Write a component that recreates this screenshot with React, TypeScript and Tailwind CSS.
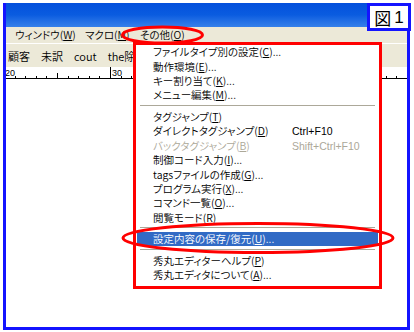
import React from "react";

type Item =
  | { sep: true }
  | {
      sep?: false;
      label: string;
      k: string;
      dots?: boolean;
      sc?: string;
      disabled?: boolean;
      active?: boolean;
    };

const ITEMS: Item[] = [
  { label: "ファイルタイプ別の設定", k: "C", dots: true },
  { label: "動作環境", k: "E", dots: true },
  { label: "キー割り当て", k: "K", dots: true },
  { label: "メニュー編集", k: "M", dots: true },
  { sep: true },
  { label: "タグジャンプ", k: "T" },
  { label: "ダイレクトタグジャンプ", k: "D", sc: "Ctrl+F10" },
  { label: "バックタグジャンプ", k: "B", sc: "Shift+Ctrl+F10", disabled: true },
  { label: "制御コード入力", k: "I", dots: true },
  { label: "tagsファイルの作成", k: "G", dots: true },
  { label: "プログラム実行", k: "X", dots: true },
  { label: "コマンド一覧", k: "O", dots: true },
  { label: "閲覧モード", k: "R" },
  { sep: true },
  { label: "設定内容の保存/復元", k: "U", dots: true, active: true },
  { sep: true },
  { label: "秀丸エディターヘルプ", k: "P" },
  { label: "秀丸エディタについて", k: "A", dots: true },
];

const font =
  "font-['Noto_Sans_CJK_JP','Noto_Sans',sans-serif] font-[350] [font-feature-settings:'palt']";

function Mn({ label, k }: { label: string; k: string }) {
  return (
    <>
      {label}(<span className="underline underline-offset-1">{k}</span>)
    </>
  );
}

function Ruler() {
  const ticks = [];
  for (let n = 0; n <= 38; n++) {
    const x = Math.round(4 + n * 10.6 - 6) + 0.5;
    const h = n % 10 === 0 ? 11 : n % 5 === 0 ? 5 : 2;
    ticks.push(
      <line key={n} x1={x} x2={x} y1={11 - h} y2={11} stroke="#000" strokeWidth={1} />
    );
  }
  return (
    <svg width="402" height="13" className="block">
      <line x1="0" x2="402" y1="11.5" y2="11.5" stroke="#000" strokeWidth={1} />
      {ticks}
      <text x="-1" y="9" fontSize="9" fontFamily="Liberation Sans, sans-serif">20</text>
      <text x="106" y="9" fontSize="9" fontFamily="Liberation Sans, sans-serif">30</text>
    </svg>
  );
}

export default function App() {
  return (
    <div className={`relative w-[414px] h-[332px] bg-white overflow-hidden ${font}`}>
      {/* window frame */}
      <div className="absolute left-[3px] top-[3px] w-[407px] h-[327px] border-[3px] border-t-0 border-[#1414ff] flex flex-col">
        <div className="h-[24px] shrink-0 bg-gradient-to-b from-[#0550dc] via-[#0a5ce0] to-[#3580ea]" />
        <div className="h-[16px] shrink-0 bg-[#ece9d8] flex items-center text-[10.5px] text-black leading-[12px] whitespace-nowrap">
          <span className="ml-[9px] w-[70px]">
            <Mn label="ウィンドウ" k="W" />
          </span>
          <span className="w-[55px]">
            <Mn label="マクロ" k="M" />
          </span>
          <span>
            <Mn label="その他" k="O" />
          </span>
        </div>
        <div className="h-[24px] shrink-0 bg-[#ece9d8] border-t border-white flex items-center gap-[11px] pl-[2px] text-[11px] leading-[12px] text-black">
          <span>顧客</span>
          <span>未訳</span>
          <span>cout</span>
          <span>the除</span>
        </div>
        <div className="h-[13px] shrink-0 bg-white overflow-hidden">
          <Ruler />
        </div>
        <div className="flex-1 bg-white" />
      </div>

      {/* figure label */}
      <div className="absolute left-[367px] top-[3px] w-[44px] h-[28px] border-[3px] border-[#1414ff] bg-white flex items-center justify-center gap-[3px] text-[17px] font-normal leading-none text-black">
        <span>図</span>
        <span className="font-['Liberation_Sans',sans-serif]">1</span>
      </div>

      {/* dropdown menu */}
      <div className="absolute left-[133px] top-[42px] w-[249px] h-[247px] border-[3px] border-[#ff0000] bg-white flex flex-col px-[1px] text-[10.5px] leading-[12px]">
        {ITEMS.map((it, i) =>
          it.sep ? (
            <div key={i} className="h-[7.2px] shrink-0 flex flex-col justify-center px-[3px]">
              <div className="border-t border-[#aca899] border-b border-b-white" />
            </div>
          ) : (
            <div
              key={i}
              className={`h-[14.4px] shrink-0 flex items-center pl-[16px] ${
                it.active ? "bg-[#316ac5] text-white" : it.disabled ? "text-[#aca899]" : "text-black"
              }`}
            >
              <span className="w-[139px] whitespace-nowrap">
                <Mn label={it.label} k={it.k} />
                {it.dots ? "..." : ""}
              </span>
              {it.sc && (
                <span className="whitespace-nowrap font-['Liberation_Sans',sans-serif] font-normal text-[10.5px]">
                  {it.sc}
                </span>
              )}
            </div>
          )
        )}
      </div>

      {/* annotation ellipses */}
      <svg className="absolute left-0 top-0 pointer-events-none" width="414" height="332">
        <ellipse cx="162.5" cy="35" rx="40" ry="8" fill="none" stroke="#ff0000" strokeWidth="3" />
        <ellipse cx="258" cy="238" rx="135" ry="14.5" fill="none" stroke="#ff0000" strokeWidth="3" />
      </svg>
    </div>
  );
}
